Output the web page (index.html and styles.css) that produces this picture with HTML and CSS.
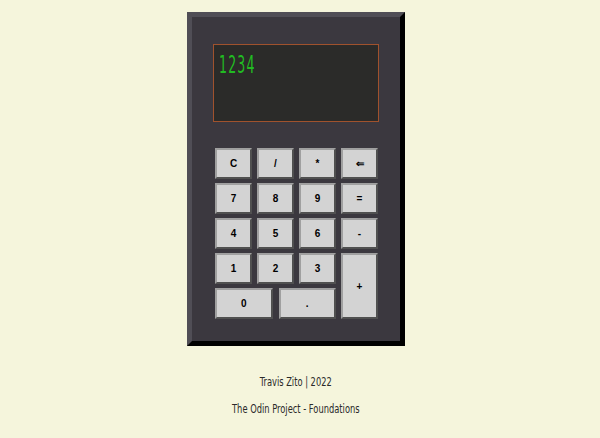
FILE: index.html
```html
<!DOCTYPE html>
<html>
<head>
<meta charset="utf-8">
<link rel="stylesheet" href="styles.css">
</head>
<body>
<div class="page">
  <div class="calc">
    <div class="display"><span class="readout">1234</span></div>
    <div class="keys">
      <button class="key">C</button>
      <button class="key">/</button>
      <button class="key">*</button>
      <button class="key">⇐</button>
      <button class="key">7</button>
      <button class="key">8</button>
      <button class="key">9</button>
      <button class="key">=</button>
      <button class="key">4</button>
      <button class="key">5</button>
      <button class="key">6</button>
      <button class="key">-</button>
      <button class="key">1</button>
      <button class="key">2</button>
      <button class="key">3</button>
      <button class="key plus">+</button>
      <div class="lastrow">
        <button class="key wide">0</button>
        <button class="key wide">.</button>
      </div>
    </div>
  </div>
  <div class="footer">
    <p class="line"><span class="squeeze">Travis Zito | 2022</span></p>
    <p class="line"><span class="squeeze">The Odin Project - Foundations</span></p>
  </div>
</div>
</body>
</html>
```
FILE: styles.css
```css
html, body {
  margin: 0;
  padding: 0;
  background: #f5f5dc;
}
.page {
  width: 592px;
  display: flex;
  flex-direction: column;
  align-items: center;
  padding-top: 12px;
}
.calc {
  width: 208px;
  height: 324px;
  background: #3b383f;
  border: 5px solid;
  border-color: #504e56 #000 #000 #504e56;
  display: flex;
  flex-direction: column;
}
.display {
  margin: 27px 0 0 21px;
  background: #2b2b29;
  border: 1px solid #a0522d;
  padding: 6px 0 0 5px;
  width: 159px;
  height: 70px;
  overflow: hidden;
}
.readout {
  display: inline-block;
  font-family: "DejaVu Sans Condensed", sans-serif;
  font-size: 24px;
  line-height: 28px;
  color: #22bb22;
  transform: scaleX(0.58);
  transform-origin: left center;
  letter-spacing: 2px;
}
.keys {
  margin: 26px 0 0 23px;
  display: grid;
  grid-template-columns: repeat(4, 37px);
  grid-auto-rows: 31px;
  gap: 4px 5px;
}
.key {
  margin: 0;
  padding: 0;
  background: #d3d3d3;
  border: 2px solid;
  border-color: #a0a0a0 #505050 #505050 #a0a0a0;
  font-family: "Liberation Sans", Arial, sans-serif;
  font-weight: bold;
  font-size: 10px;
  color: #000;
}
.plus {
  grid-column: 4;
  grid-row: 4 / span 2;
}
.lastrow {
  grid-column: 1 / span 3;
  grid-row: 5;
  display: flex;
  gap: 6px;
}
.wide {
  flex: 1;
}
.footer {
  margin-top: 29px;
  display: flex;
  flex-direction: column;
  align-items: center;
  gap: 13px;
}
.line {
  margin: 0;
  font-family: "DejaVu Sans Condensed", sans-serif;
  font-size: 12px;
  line-height: 14px;
  color: #2a2a2a;
  text-align: center;
}
.squeeze {
  display: inline-block;
  transform: scaleX(0.77);
}
```
